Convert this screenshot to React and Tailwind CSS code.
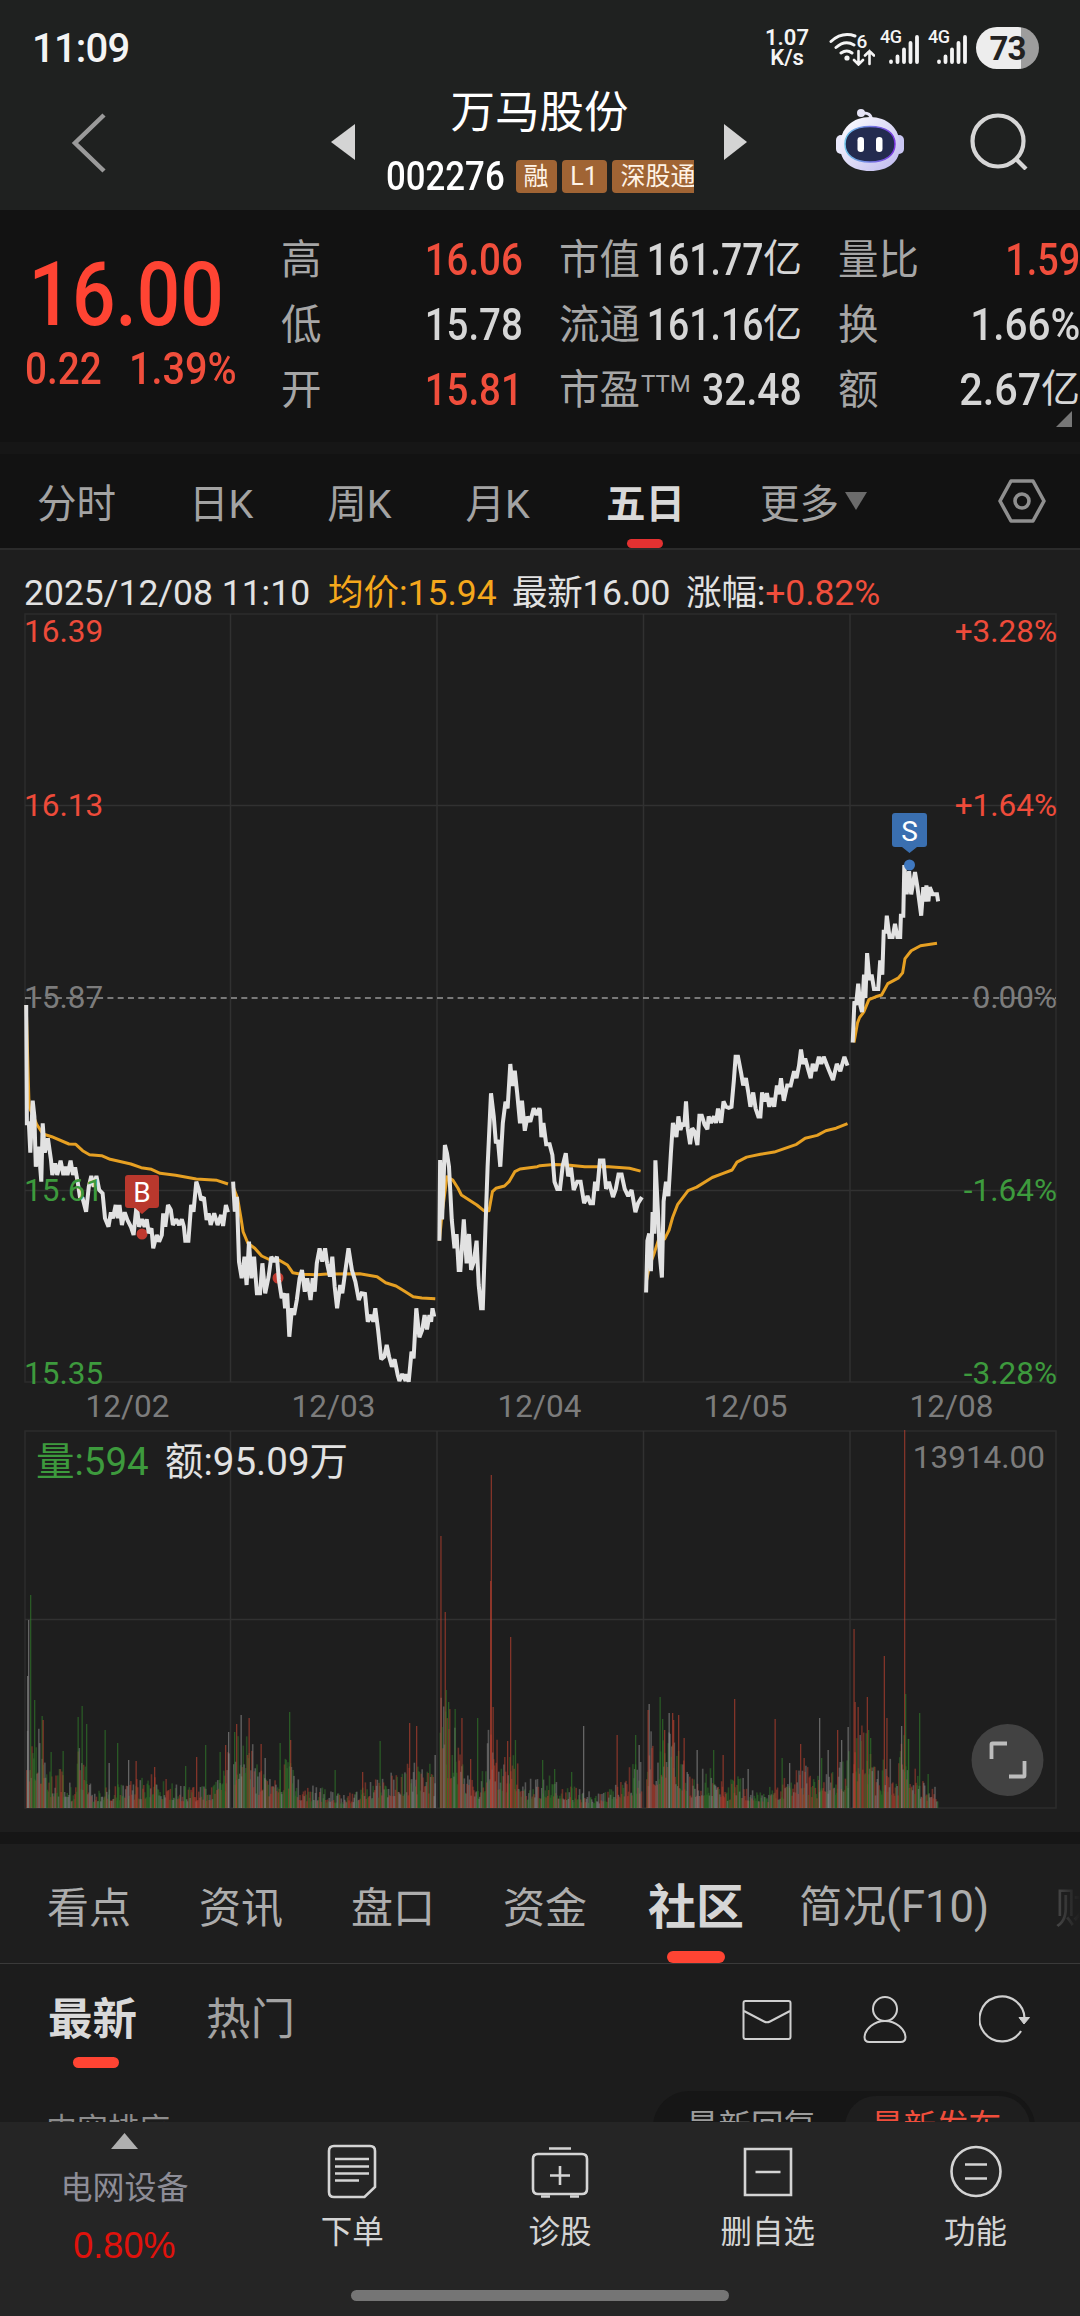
import React from "react";

const quoteRows = [
  [
    { label: "高", value: "16.06", up: true, fit: "scale-x-[.855]" },
    { label: "低", value: "15.78", fit: "scale-x-[.855]" },
    { label: "开", value: "15.81", up: true, fit: "scale-x-[.855]" },
  ],
  [
    { label: "市值", value: "161.77", unit: "亿", fit: "scale-x-[.83]" },
    { label: "流通", value: "161.16", unit: "亿", fit: "scale-x-[.83]" },
    { label: "市盈", sup: "TTM", value: "32.48", fit: "scale-x-[.87]" },
  ],
  [
    { label: "量比", value: "1.59", up: true, fit: "scale-x-[.84]" },
    { label: "换", value: "1.66%", fit: "scale-x-[.9]" },
    { label: "额", value: "2.67", unit: "亿", fit: "scale-x-[.92]" },
  ],
];

// Sampled line data, left part and right part of the chart use their own units
const left = ([x, y]) => [x / 2.904, 980 + y / 3];
const right = ([x, y]) => [540 + x / 2.904, 780 + y / 2.8];

const parse = (text, project) =>
  text
    .trim()
    .split(/\s+/)
    .map((pair) => project(pair.split(",").map(Number)));

const toPoints = (list) =>
  list.map(([x, y]) => `${x.toFixed(1)},${y.toFixed(1)}`).join(" ");

const priceLines = [
  parse(
    "76,75 78,430 84,430 88,518 95,362 100,410 104,560 112,500 120,605 124,430 130,518 139,475 148,540 152,585 160,550 166,585 176,542 184,585 190,560 196,585 205,542 212,585 218,562 226,608 232,650 240,655 250,695 258,620 265,588 272,620 280,588 288,630 298,640 305,715 315,740 322,697 328,715 336,675 342,715 347,675 354,735 362,697 370,720 380,740 388,765 397,672 404,740 412,718 420,740 426,718 432,760 440,745 445,805 455,765 462,785 470,765 474,700 480,740 488,675 496,690 502,735 512,718 520,735 528,718 534,740 538,782 547,782 555,675 562,695 570,605 578,630 584,660 592,652 600,720 606,700 612,735 622,700 632,735 642,705 648,738 656,675 662,697",
    left
  ),
  parse(
    "677,605 682,695 688,650 694,845 702,895 710,830 716,915 723,785 730,895 738,830 746,940 755,940 762,850 770,940 780,890 788,830 796,845 804,830 810,900 818,955 824,940 828,985 834,940 840,1070 848,985 854,1005 862,960 870,895 877,870 885,935 892,895 902,960 908,895 914,935 920,850 928,805 936,845 944,805 950,850 958,890 965,830 972,920 979,985 988,915 994,940 1002,880 1012,805 1022,870 1032,905 1042,960 1050,940 1060,942 1068,1025 1078,1005 1084,1025 1090,985 1098,1050 1107,1138 1116,1130 1123,1095 1130,1130 1138,1160 1146,1138 1155,1185 1160,1203 1168,1182 1178,1203 1180,1182 1187,1205 1195,1115 1201,1135 1209,985 1218,1072 1226,1050 1233,1005 1240,1048 1247,1005 1252,1025 1256,985 1261,1010",
    left
  ),
  [
    ...parse(
      "1276,782 1278,540 1284,718 1292,495 1298,520 1304,560 1312,720 1320,805 1326,762 1332,870 1337,870 1347,718 1355,850 1362,762 1368,870 1376,845 1384,782 1390,915 1397,985 1402,985 1410,740 1416,560 1426,340 1434,410 1440,490 1446,480 1453,560 1460,430 1468,365 1474,385 1482,252 1488,318 1495,272 1502,340 1510,430 1516,362 1524,452 1532,410 1540,425 1550,385 1558,405 1566,385",
      left
    ),
    ...parse(
      "0,925 4,1000 10,960 18,1020 28,1020 36,1050 42,1125 50,1145 58,1145 66,1080 75,1045 82,1110 90,1085 98,1148 108,1125 118,1125 128,1185 138,1165 146,1185 154,1185 160,1125 166,1150 174,1065 184,1065 192,1145 200,1125 212,1168 220,1145 228,1105 237,1105 246,1145 256,1165 266,1148 277,1210 285,1185 296,1168",
      right
    ),
  ],
  parse(
    "308,1435 312,1290 317,1270 322,1375 327,1210 332,1270 335,1065 342,1200 348,1330 354,1393 359,1180 366,1125 373,1165 380,1045 386,960 396,1000 402,942 408,980 414,960 419,970 424,900 429,975 436,1020 442,975 449,985 457,1022 463,940 470,940 478,965 486,978 490,942 497,960 505,942 511,960 517,920 526,960 533,900 540,915 548,918 556,915 563,840 568,775 575,775 584,820 590,855 598,835 605,875 611,915 619,875 626,920 634,942 640,942 645,875 652,900 659,877 666,915 673,890 680,915 688,855 694,880 700,835 708,898 718,855 728,855 738,815 745,835 752,800 758,755 764,795 770,780 780,815 786,835 792,795 800,815 810,775 817,795 824,775 832,795 840,815 851,840 862,795 872,815 884,775 893,800",
    right
  ),
  parse(
    "908,735 913,620 918,630 924,570 930,630 935,650 941,545 945,610 950,485 957,560 963,545 970,585 982,585 988,505 994,545 998,425 1004,425 1007,380 1015,440 1024,440 1031,403 1038,440 1046,440 1048,380 1055,380 1058,238 1065,320 1072,255 1078,320 1089,258 1096,300 1107,380 1113,300 1118,340 1122,295 1128,340 1132,300 1140,320 1153,320 1156,340",
    right
  ),
];

const averageLines = [
  parse(
    "76,75 84,360 86,385 96,405 106,432 125,462 150,470 200,492 220,493 240,512 260,524 295,527 320,538 380,552 410,563 440,568 465,580 510,586 570,597 630,601 662,612",
    left
  ),
  parse(
    "677,620 690,655 700,715 706,755 720,790 740,805 760,828 785,840 810,840 835,855 850,878 875,883 920,884 950,882 1045,881 1095,890 1120,908 1150,918 1175,934 1200,950 1225,954 1264,956",
    left
  ),
  [
    ...parse(
      "1276,782 1284,700 1298,590 1315,600 1330,625 1340,645 1385,675 1405,692 1420,692 1430,635 1440,625 1465,618 1478,605 1495,575 1510,567 1560,560",
      left
    ),
    ...parse("0,1080 40,1077 80,1078 130,1083 200,1083 260,1087 292,1095", right),
  ],
  parse(
    "310,1400 318,1360 330,1330 345,1285 362,1285 375,1260 385,1225 400,1188 430,1150 455,1140 500,1113 530,1102 558,1092 572,1070 600,1056 640,1048 680,1042 745,1020 770,1003 805,995 830,982 860,975 893,962",
    right
  ),
  parse(
    "912,735 922,680 928,665 940,650 955,615 975,607 992,602 1010,570 1040,555 1053,540 1060,500 1078,478 1105,464 1153,457",
    right
  ),
];

const columns = [230.5, 437, 643.5, 850];
const volumeBase = 1808;
const barColors = { r: "#b8402f", g: "#2f7a29", w: "#8c8c8c" };

// [x, usual bar height]
const envelope = [
  [26, 70], [34, 75], [43, 65], [48, 30], [62, 32], [72, 16], [79, 55], [84, 45],
  [92, 14], [110, 20], [135, 24], [155, 28], [175, 20], [200, 18], [215, 24], [228, 48],
  [233, 66], [248, 66], [256, 38], [266, 30], [288, 42], [300, 20], [325, 16], [345, 10],
  [370, 24], [400, 34], [425, 40], [436, 30], [440, 92], [452, 80], [462, 42], [480, 22],
  [491, 90], [500, 34], [512, 55], [524, 22], [545, 28], [570, 18], [600, 12], [622, 30],
  [640, 40], [648, 62], [664, 62], [676, 62], [690, 30], [710, 36], [725, 16], [736, 34],
  [750, 14], [775, 18], [800, 40], [820, 24], [845, 48], [853, 80], [868, 62], [875, 34],
  [888, 44], [895, 24], [904, 72], [912, 36], [925, 20], [938, 18],
];

const spikes = [
  [28, 188, "w"], [27, 132, "w"], [30, 213, "g"], [34, 108, "g"], [41.5, 92, "g"], [42.5, 88, "r"],
  [77.5, 91, "g"], [81.5, 102, "g"], [86, 84, "g"], [104.5, 78, "g"], [117, 65, "g"], [62.5, 57, "g"],
  [50.5, 56, "g"], [128, 48, "w"], [108.5, 45, "w"], [135.5, 47, "r"], [154, 41, "r"], [185, 42, "g"],
  [196, 51, "r"], [205, 63, "g"], [219.5, 56, "g"], [225, 63, "r"], [228, 76, "w"], [236, 84, "r"],
  [240.5, 93, "w"], [248.5, 90, "r"], [234, 76, "g"], [260.5, 64, "r"], [264.5, 50, "w"], [279.5, 65, "g"],
  [289, 96, "g"], [290, 68, "r"], [334.5, 38, "g"], [362, 36, "r"], [379.5, 67, "g"], [409, 85, "r"],
  [416, 82, "r"], [434.5, 53, "w"], [440.3, 272, "r"], [444.6, 196, "r"], [445.5, 118, "g"], [448, 106, "g"],
  [454.5, 99, "g"], [461.3, 90, "r"], [477, 90, "g"], [470, 49, "r"], [490.7, 333, "r"], [490, 227, "r"],
  [492.5, 101, "r"], [510, 171, "r"], [507, 67, "r"], [514.8, 68, "g"], [542, 48, "g"], [554, 39, "g"],
  [583, 82, "w"], [571, 36, "g"], [616.5, 73, "r"], [635, 73, "g"], [638.5, 63, "w"], [648.5, 104, "w"],
  [647.5, 98, "r"], [659.5, 111, "g"], [662, 89, "g"], [664, 78, "r"], [668.5, 95, "w"], [672, 95, "r"],
  [673, 88, "r"], [678, 93, "r"], [683.5, 70, "r"], [696.5, 58, "w"], [713, 58, "g"], [722.5, 53, "r"],
  [734, 109, "r"], [747.5, 39, "w"], [774.5, 89, "r"], [781.5, 50, "g"], [789, 45, "w"], [800, 64, "r"],
  [803.5, 50, "r"], [819, 90, "w"], [821, 50, "g"], [827.5, 58, "w"], [837, 78, "r"], [841, 68, "w"],
  [847.5, 81, "w"], [853.4, 179, "r"], [854.5, 106, "r"], [857.5, 101, "r"], [866.7, 111, "r"], [868, 78, "g"],
  [870, 70, "g"], [883.7, 152, "r"], [886.3, 90, "r"], [901, 82, "w"], [904, 378, "r"], [905, 114, "g"],
  [908, 69, "g"], [919, 95, "g"], [927.5, 34, "g"],
];

const envelopeAt = (x) => {
  const i = envelope.findIndex(([ex]) => ex > x);
  if (i <= 0) return envelope[i === 0 ? 0 : envelope.length - 1][1];
  const [x0, h0] = envelope[i - 1];
  const [x1, h1] = envelope[i];
  return h0 + ((h1 - h0) * (x - x0)) / (x1 - x0);
};

const buildBars = () => {
  const bars = [];
  let seed = 2276;
  const random = () => {
    seed = (seed * 16807) % 2147483647;
    return seed / 2147483647;
  };
  const days = [
    [26, 228.5],
    [233, 435],
    [439.5, 641.5],
    [646, 848.5],
    [852.5, 937],
  ];
  days.forEach(([from, to]) => {
    for (let x = from; x < to; x += 0.86) {
      const pick = random();
      const height = envelopeAt(x) * (0.35 + 0.9 * Math.pow(random(), 1.6));
      const color = pick < 0.36 ? "r" : pick < 0.7 ? "g" : "w";
      bars.push([x, height, color]);
    }
  });
  return bars;
};

const volumeBars = buildBars();

const Digits = ({ children, className = "" }) => (
  <span className={`inline-block font-medium ${className}`}>{children}</span>
);

const Signal = () => (
  <svg viewBox="0 0 40 36" className="w-[40px] h-[36px] overflow-visible">
    <text x="0" y="13" fill="#f4f4f4" className="text-[18px] font-medium tracking-[-0.5px]">
      4G
    </text>
    <path
      d="M11 31.500v.6M17.500 26.500v5.500M24 19.500v12.500M30.500 13v19M37 7v25"
      stroke="#f4f4f4"
      strokeWidth="3.800"
      strokeLinecap="round"
    />
  </svg>
);

const StatusBar = () => (
  <div className="h-24 flex items-center pl-[32px] pr-[41px] text-[#f4f4f4]">
    <span className="text-[40px] font-medium tracking-[-0.8px] mt-[2px]">11:09</span>
    <div className="ml-auto flex items-center">
      <div className="w-[48px] text-[22px] leading-[20px] font-semibold text-center mr-[18px]">
        <div>1.07</div>
        <div>K/s</div>
      </div>
      <svg viewBox="0 0 46 36" className="w-[46px] h-[36px] mr-[5px]">
        <g fill="none" stroke="#f4f4f4" strokeWidth="3" strokeLinecap="round">
          <path d="M2 11.500Q13 1.500 26 6M7 17.500Q16 9.500 25 15M12 23q6-4 11 0" />
          <path d="M29.500 21v13M25 30l4.500 4.500 4.500-4.500M40.500 34V21M36 25.500l4.500-4.500 4.500 4.500" strokeWidth="2.600" />
        </g>
        <circle cx="18" cy="28" r="2.600" fill="#f4f4f4" />
        <text x="27.500" y="17.500" fill="#f4f4f4" className="text-[19px] font-medium">
          6
        </text>
      </svg>
      <Signal />
      <div className="w-[8px]" />
      <Signal />
      <div className="ml-[8px] w-[63px] h-[42px] rounded-full overflow-hidden bg-[linear-gradient(90deg,#ededed_0_45px,#9d9d9d_45px)] text-[#222] text-[33px] leading-[43px] font-bold text-center tracking-[-1px]">
        73
      </div>
    </div>
  </div>
);

const Robot = () => (
  <svg viewBox="0 0 68 64" className="w-[68px] h-[64px]">
    <defs>
      <linearGradient id="shell" x1="0" y1="0" x2="1" y2="1">
        <stop offset="0" stopColor="#ffffff" />
        <stop offset="1" stopColor="#bdb8ee" />
      </linearGradient>
      <linearGradient id="rim" x1="0" y1="0" x2="1" y2="0">
        <stop offset="0" stopColor="#6fc4e8" />
        <stop offset="1" stopColor="#7a35e0" />
      </linearGradient>
    </defs>
    <path d="M26 5q9-1 9.500 7" fill="none" stroke="#e6e4f6" strokeWidth="3" />
    <circle cx="25" cy="5" r="4" fill="#e6e4f6" />
    <rect x="0" y="27" width="10" height="19" rx="5" fill="#e9e8fb" />
    <rect x="58" y="27" width="10" height="19" rx="5" fill="#c9c6f2" />
    <path d="M34 9C51 9 64 20 64 38 64 54 52 63 34 63S4 54 4 38C4 20 17 9 34 9Z" fill="url(#shell)" />
    <path d="M34 18.500C50 18.500 59 25 59 36S50 54 34 54 9 47 9 36 18 18.500 34 18.500Z" fill="#232b4f" stroke="url(#rim)" strokeWidth="1.500" />
    <rect x="21.500" y="29" width="6.500" height="15" rx="3.200" fill="#fff" />
    <rect x="40" y="29" width="6.500" height="15" rx="3.200" fill="#fff" />
  </svg>
);

const TitleBar = () => (
  <div className="h-[114px] flex items-center pl-[71px] pr-[51px]">
    <svg viewBox="0 0 36 60" className="w-[36px] h-[60px] mt-[-21px]">
      <path d="M33 2 4 30l29 28" fill="none" stroke="#9a9a9a" strokeWidth="4.500" />
    </svg>
    <svg viewBox="0 0 24 36" className="w-[24px] h-[36px] ml-[224px] mt-[-22px]">
      <path d="M24 0v36L0 18Z" fill="#d4d4d4" />
    </svg>
    <div className="w-[369px] h-full flex flex-col items-center">
      <h1 className="text-[44.5px] leading-[50px] text-white mt-[-8px]">万马股份</h1>
      <div className="w-[308px] h-[36px] mt-[20px] flex items-center overflow-hidden text-white">
        <Digits className="text-[40px] leading-[36px] w-[130px] pt-[2px] origin-left scale-x-[.87]">
          002276
        </Digits>
        <div className="flex shrink-0 gap-[5px] text-[25px] leading-[33px] text-[#fff3e6]">
          <span className="w-[41px] h-[33px] rounded-[4px] bg-[#a06434] text-center">融</span>
          <span className="w-[45px] h-[33px] rounded-[4px] bg-[#a06434] text-center">L1</span>
          <span className="w-[92px] h-[33px] rounded-[4px] bg-[#a06434] pl-[9px]">深股通</span>
        </div>
      </div>
    </div>
    <svg viewBox="0 0 24 36" className="w-[24px] h-[36px] mt-[-22px]">
      <path d="M0 0v36l23-18Z" fill="#d4d4d4" />
    </svg>
    <div className="ml-auto mt-[-26px] flex items-center">
      <Robot />
      <svg viewBox="0 0 60 60" className="w-[60px] h-[60px] ml-[65px]">
        <g fill="none" stroke="#d6d6d6" strokeWidth="4.200">
          <circle cx="29" cy="31" r="25.500" />
          <path d="m47 49 10 10" />
        </g>
      </svg>
    </div>
  </div>
);

const QuoteColumn = ({ rows, className }) => (
  <div className={`flex flex-col ${className}`}>
    {rows.map((row) => (
      <div key={row.label} className="h-[65px] flex items-center whitespace-nowrap">
        <span className="text-[40.5px] text-[#a6a6a6] mt-[1px]">{row.label}</span>
        {row.sup && (
          <span className="text-[24px] text-[#a6a6a6] self-start mt-[9px] ml-[1px]">
            {row.sup}
          </span>
        )}
        <div
          className={`flex-1 min-w-0 flex items-center justify-end ${
            row.up ? "text-[#f04e3c]" : "text-[#d6d6d6]"
          }`}
        >
          <Digits className={`text-[45px] origin-right ${row.fit}`}>{row.value}</Digits>
          {row.unit && <span className="text-[39px]">{row.unit}</span>}
        </div>
      </div>
    ))}
  </div>
);

const Quote = () => (
  <section className="relative h-[232px] bg-[#121212] flex overflow-hidden">
    <div className="w-[281px] pl-[25px] pt-[36px] text-[#ff4433]">
      <div className="h-[98px] leading-[98px]">
        <Digits className="text-[89px] origin-left pl-[4px] scale-x-[.86]">16.00</Digits>
      </div>
      <div className="flex text-[45px] leading-[50px] text-[#f04e3c] whitespace-nowrap">
        <Digits className="w-[104px] origin-left scale-x-[.86]">0.22</Digits>
        <Digits className="origin-left scale-x-[.88]">1.39%</Digits>
      </div>
    </div>
    <QuoteColumn rows={quoteRows[0]} className="w-[242px] pt-[17px]" />
    <QuoteColumn rows={quoteRows[1]} className="w-[243px] pt-[17px] ml-[36px]" />
    <QuoteColumn rows={quoteRows[2]} className="w-[242px] pt-[17px] ml-[36px]" />
    <svg viewBox="0 0 16 16" className="absolute right-[8px] bottom-[15px] w-[16px] h-[16px]">
      <path d="M16 0v16H0Z" fill="#777" />
    </svg>
  </section>
);

const PeriodTabs = () => (
  <nav className="h-[96px] bg-[#121212] border-b-2 border-[#2b2b2b] flex items-center pl-[37px] pr-[34px] text-[39.5px] text-[#a3a3a3]">
    <div className="h-full flex items-center gap-[74px]">
      <span className="pt-[8px]">分时</span>
      <span className="pt-[8px] -ml-[1px]">日K</span>
      <span className="pt-[8px]">周K</span>
      <span className="pt-[8px]">月K</span>
      <span className="relative h-full flex items-center pt-[8px] ml-[2px] font-bold text-[#d9d9d9]">
        五日
        <i className="absolute bottom-0 left-1/2 -translate-x-1/2 w-[36px] h-[9px] rounded-full bg-[#e33131]" />
      </span>
      <span className="flex items-center gap-[6px] pt-[8px] ml-[1px]">
        更多
        <svg viewBox="0 0 22 18" className="w-[22px] h-[18px] mt-[-8px]">
          <path d="M0 0h22L11 18Z" fill="#6b6b6b" />
        </svg>
      </span>
    </div>
    <svg viewBox="0 0 48 44" className="w-[48px] h-[44px] ml-auto">
      <g fill="none" stroke="#8f8f8f" strokeWidth="3.600" strokeLinejoin="round">
        <path d="M13 2h22l11 20-11 20H13L2 22Z" />
        <circle cx="24" cy="22" r="7" />
      </g>
    </svg>
  </nav>
);

const InfoLine = () => (
  <div className="h-[63px] flex items-center pl-[24px] pt-[24px] text-[35.5px] whitespace-nowrap text-[#e2e2e2]">
    <span className="w-[304px]">2025/12/08 11:10</span>
    <span className="w-[184px] text-[#f5a81c]">均价:15.94</span>
    <span className="w-[174px] tracking-[-0.3px]">最新16.00</span>
    <span className="tracking-[-0.1px]">
      涨幅:<span className="text-[#f04e3c]">+0.82%</span>
    </span>
  </div>
);

const priceLabels = [
  { y: 641.5, price: "16.39", pct: "+3.28%", color: "#ee4b3a" },
  { y: 815.5, price: "16.13", pct: "+1.64%", color: "#ee4b3a" },
  { y: 1007.5, price: "15.87", pct: "0.00%", color: "#7c7c7c" },
  { y: 1200.5, price: "15.61", pct: "-1.64%", color: "#3d9a3d" },
  { y: 1384, price: "15.35", pct: "-3.28%", color: "#3d9a3d" },
];

const Chart = () => (
  <svg viewBox="0 613 1080 1219" className="block w-[1080px] h-[1219px]">
    {/* Grid */}
    <g fill="none" stroke="#2c2c2c" strokeWidth="1.500">
      <rect x="25" y="614" width="1031" height="768" />
      <rect x="25" y="1431" width="1031" height="377" />
      <path stroke="#313131" d="M25 805.500h1031M25 1190.500h1031M25 1619.500h1031" />
      {columns.map((x) => (
        <path key={x} stroke="#313131" d={`M${x} 614V1382M${x} 1431V1808`} />
      ))}
    </g>
    <path d="M25 998H1056" stroke="#989898" strokeWidth="1.700" strokeDasharray="6 4.300" />

    {/* Volume */}
    {volumeBars.map(([x, h, c], i) => (
      <rect key={i} x={x} y={volumeBase - h} width="1.600" height={h} fill={barColors[c]} opacity=".5" />
    ))}
    {spikes.map(([x, h, c]) => (
      <rect key={`${x}-${h}`} x={x} y={volumeBase - h} width="1.300" height={h} fill={barColors[c]} opacity=".65" />
    ))}

    {/* Price and average, trade dots lie under the price line */}
    <circle cx="142" cy="1234" r="5.500" fill="#c0392f" />
    <circle cx="278" cy="1278" r="5.500" fill="#c0392f" />
    <g fill="none" strokeLinejoin="round">
      {averageLines.map((line, i) => (
        <polyline key={i} points={toPoints(line)} stroke="#e6a023" strokeWidth="3" />
      ))}
      {priceLines.map((line, i) => (
        <polyline key={i} points={toPoints(line)} stroke="#e2e2e2" strokeWidth="4" strokeLinejoin="miter" strokeMiterlimit="2" />
      ))}
    </g>

    {/* Labels */}
    <g className="text-[31.500px]">
      {priceLabels.map((row) => (
        <g key={row.price} fill={row.color}>
          <text x="24" y={row.y}>{row.price}</text>
          <text x="1057" y={row.y} textAnchor="end">{row.pct}</text>
        </g>
      ))}
      {["12/02", "12/03", "12/04", "12/05", "12/08"].map((day, i) => (
        <text key={day} x={127.5 + i * 206} y="1416.500" textAnchor="middle" fill="#7c7c7c">
          {day}
        </text>
      ))}
    </g>
    <g className="text-[38.500px]">
      <text x="36" y="1475" fill="#3d9a3d">量:594</text>
      <text x="165" y="1475" fill="#e2e2e2">额:95.09万</text>
    </g>
    <text x="1045" y="1468" textAnchor="end" fill="#7c7c7c" className="text-[31.500px]">
      13914.00
    </text>

    {/* Trade marks */}
    <path d="M128 1175h28q3 0 3 3v27q0 3-3 3h-7l-7 6-7-6h-7q-3 0-3-3v-27q0-3 3-3Z" fill="#b9382d" />
    <path d="M895 813h29q3 0 3 3v28q0 3-3 3h-7l-7.500 6-7.500-6h-7q-3 0-3-3v-28q0-3 3-3Z" fill="#3a6fb0" />
    <circle cx="909.500" cy="865" r="5.500" fill="#3f78c0" />
    <g fill="#fff" textAnchor="middle" className="text-[28px]">
      <text x="142" y="1202">B</text>
      <text x="909.500" y="841">S</text>
    </g>

    {/* Full screen */}
    <circle cx="1007.500" cy="1760" r="36" fill="#424242" />
    <path
      d="M991.500 1759v-14.500q0-1 1-1h14.500M1024.500 1761v14.500q0 1-1 1H1009"
      fill="none"
      stroke="#bdbdbd"
      strokeWidth="3.800"
    />
  </svg>
);

const SectionTabs = () => (
  <nav className="h-[120px] bg-[#1e1e1e] border-b border-[#3a3a3a] flex items-center pl-[13px] overflow-hidden whitespace-nowrap text-[42px] text-[#adadad]">
    <span className="px-[34px] pt-[9px]">看点</span>
    <span className="px-[34px] pt-[9px]">资讯</span>
    <span className="px-[34px] pt-[9px]">盘口</span>
    <span className="px-[34px] pt-[9px]">资金</span>
    <span className="relative h-full flex items-center px-[27px] pt-[9px] text-[48px] font-bold text-[#d6d6d6]">
      社区
      <i className="absolute bottom-0 left-1/2 -translate-x-1/2 w-[58px] h-[12px] rounded-full bg-[#ff4433]" />
    </span>
    <span className="pl-[28px] pr-[66px] pt-[9px] text-[43.5px]">简况(F10)</span>
    <span className="pt-[9px] bg-linear-to-r from-[#4a4a4a] to-[#1e1e1e] from-0% to-60% bg-clip-text text-transparent">
      财
    </span>
  </nav>
);

const CommunityBar = () => (
  <section className="h-[158px] bg-[#1c1c1c] overflow-hidden">
    <div className="h-[110px] flex items-center pl-[48px] pr-[49px] text-[44.5px] text-[#a3a3a3]">
      <span className="relative h-full flex items-center pt-[2px] font-bold text-[#d9d9d9]">
        最新
        <i className="absolute bottom-[6px] left-[25px] w-[46px] h-[11px] rounded-full bg-[#ff4433]" />
      </span>
      <span className="ml-[69px] pt-[2px]">热门</span>
      <div className="ml-auto flex items-center pt-[2px]">
        <svg viewBox="0 0 50 42" className="w-[50px] h-[42px]">
          <g fill="none" stroke="#cfcfcf" strokeWidth="2">
            <rect x="1.500" y="2" width="47" height="38" rx="2" />
            <path d="m2 12 20 10.500q3 1.500 6 0L48 12" />
          </g>
        </svg>
        <svg viewBox="0 0 44 50" className="w-[44px] h-[50px] ml-[71px]">
          <g fill="none" stroke="#cfcfcf" strokeWidth="2">
            <circle cx="22" cy="14" r="12" />
            <path d="M22 26c11 0 20 8 20.500 16q0 5-5 5h-31q-5 0-5-5C2 34 11 26 22 26Z" />
          </g>
        </svg>
        <svg viewBox="0 0 52 50" className="w-[52px] h-[50px] ml-[72px]">
          <path d="M45.500 25A22.500 22.500 0 1 0 42 36" fill="none" stroke="#cfcfcf" strokeWidth="2.200" />
          <path d="M40 22.500h10.500L45 29Z" fill="#cfcfcf" stroke="#cfcfcf" strokeLinejoin="round" />
        </svg>
      </div>
    </div>
    <div className="flex items-start justify-between pl-[46px] pr-[45px] mt-[17px]">
      <span className="text-[31px] leading-[30px] mt-[24px] text-[#8c8c8c]">内容排序</span>
      <div className="w-[382px] h-[72px] rounded-full bg-[#161616] p-[5px] pl-[33px] flex items-center text-[32.5px]">
        <span className="w-[159px] text-[#9c9c9c]">最新回复</span>
        <span className="flex-1 h-[62px] leading-[62px] rounded-full bg-[#1e1e1e] pl-[26px] text-[#f04e3c] whitespace-nowrap">
          最新发布
        </span>
      </div>
    </div>
  </section>
);

const NavItem = ({ label, children }) => (
  <div className="w-[208px] flex flex-col items-center">
    <svg viewBox="0 0 60 60" className="w-[60px] h-[60px] mt-[19px] ml-[-1px]">
      <g fill="none" stroke="#d4d4d4" strokeWidth="2.600">
        {children}
      </g>
    </svg>
    <span className="text-[31.5px] leading-[40px] mt-[12px] ml-[-1px] text-[#d4d4d4]">{label}</span>
  </div>
);

const BottomNav = () => (
  <footer className="h-[194px] bg-[#252525]">
    <div className="h-[168px] flex">
      <div className="w-[249px] flex flex-col items-center">
        <svg viewBox="0 0 27 16" className="w-[27px] h-[16px] mt-[11px]">
          <path d="M13.500 0 27 16H0Z" fill="#b0b0b0" />
        </svg>
        <span className="text-[32px] leading-[40px] mt-[19px] text-[#8d8d97]">电网设备</span>
        <span className="text-[36px] leading-[44px] mt-[16px] text-[#e0120c] font-['Liberation_Sans',sans-serif]">
          0.80%
        </span>
      </div>
      <NavItem label="下单">
        <path d="M12 5h36q5 0 5 5v36L42.500 56H12q-5 0-5-5V10q0-5 5-5Z" />
        <path d="M13 18h34M13 25.500h34M13 32.500h34M13 39.500h24" />
      </NavItem>
      <NavItem label="诊股">
        <path d="M8 13h44q5 0 5 5v30q0 5-5 5H8q-5 0-5-5V18q0-5 5-5ZM19 7.500h22M30 25v19M20 34.500h20" />
        <path d="M11 55.500h9M40 55.500h9" />
      </NavItem>
      <NavItem label="删自选">
        <path d="M7 8h46v46H7ZM17.500 31h25" />
      </NavItem>
      <NavItem label="功能">
        <circle cx="30" cy="30.500" r="24.500" />
        <path d="M19 23.500h22M19 37.500h22" />
      </NavItem>
    </div>
    <div className="mx-auto w-[378px] h-[11px] rounded-full bg-[#757575]" />
  </footer>
);

const App = () => {
  return (
    <div className="w-[1080px] h-[2316px] overflow-hidden bg-[#161616] font-[Roboto,'Noto_Sans_CJK_SC',sans-serif]">
      <header className="h-[210px] bg-[#1f2120]">
        <StatusBar />
        <TitleBar />
      </header>
      <Quote />
      <div className="h-[12px]" />
      <PeriodTabs />
      <section className="bg-[#1e1e1e]">
        <InfoLine />
        <Chart />
      </section>
      <div className="h-[12px]" />
      <SectionTabs />
      <CommunityBar />
      <BottomNav />
    </div>
  );
};

export default App;
